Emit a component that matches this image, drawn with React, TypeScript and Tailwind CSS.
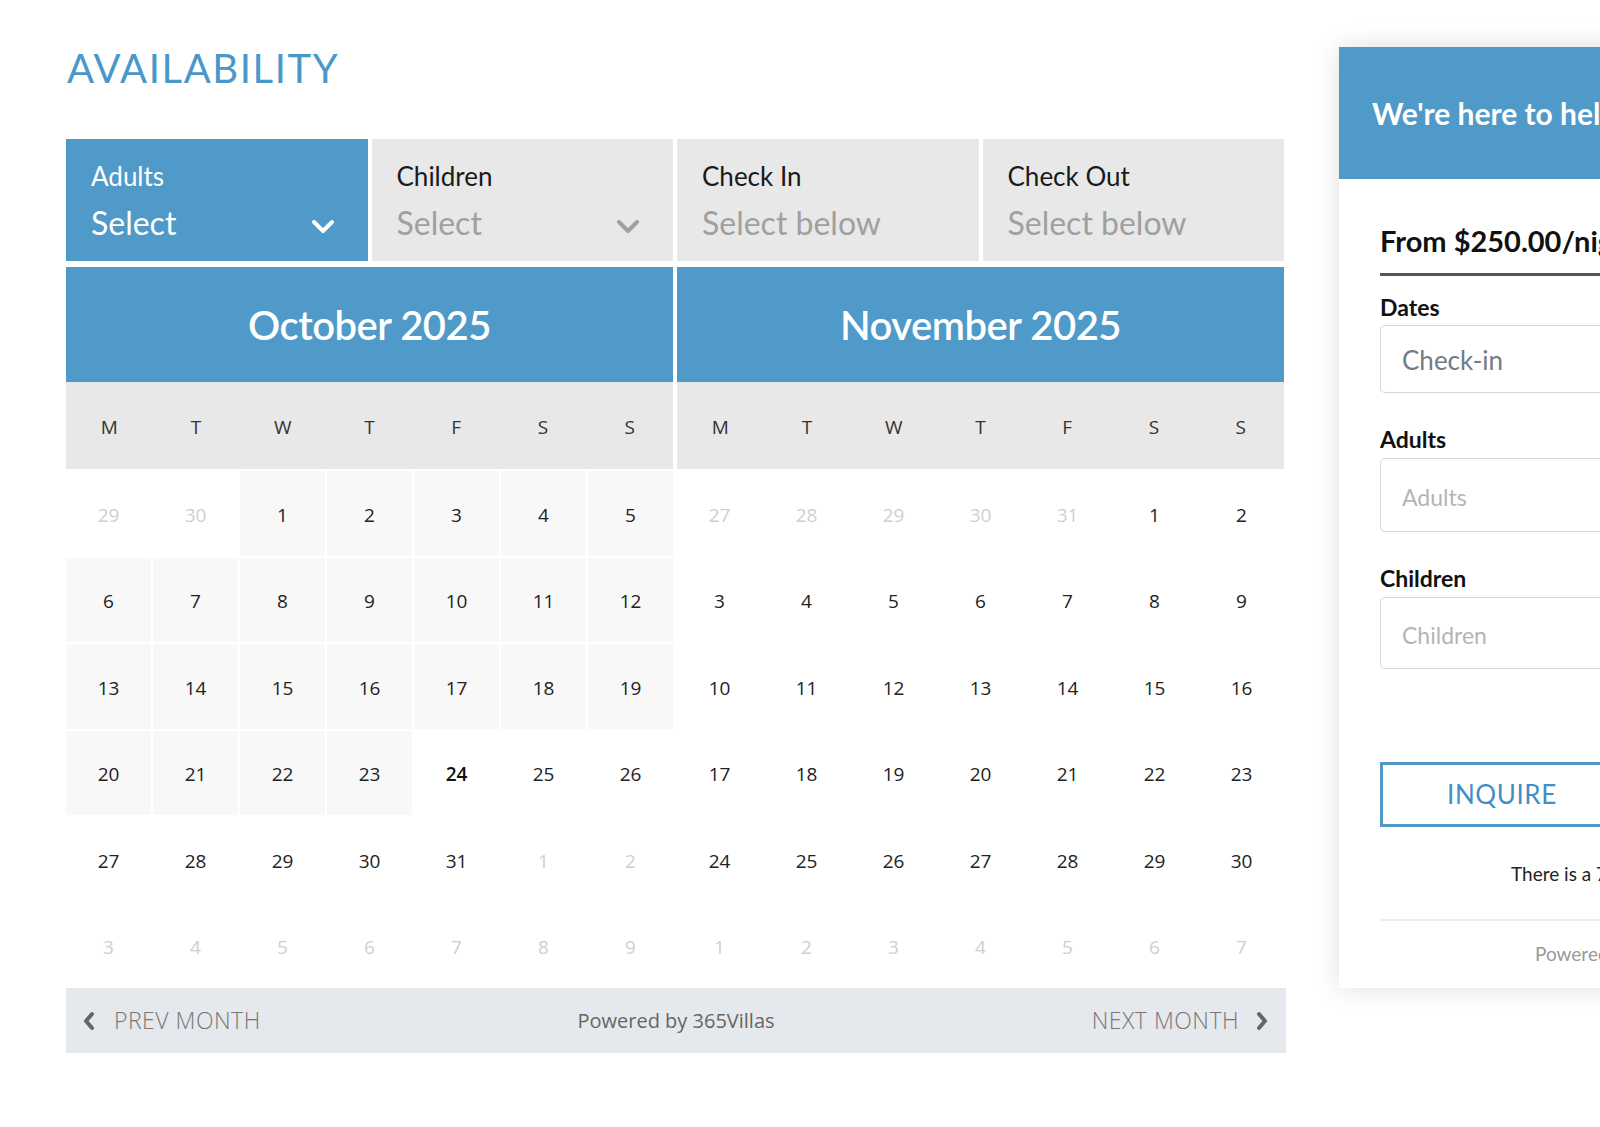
import React from "react";

const BLUE = "bg-[#4f9ac8]";

type Day = { n: number; kind: "past" | "other" | "cur" | "today" };

function Chevron({ color }: { color: string }) {
  return (
    <svg width="24" height="15" viewBox="0 0 24 15" className="shrink-0">
      <polyline points="3,3 12,12 21,3" fill="none" stroke={color} strokeWidth="4" strokeLinecap="round" strokeLinejoin="round" />
    </svg>
  );
}

function SideChevron({ dir }: { dir: "l" | "r" }) {
  return (
    <svg width="14" height="20" viewBox="0 0 14 20" className="shrink-0">
      <polyline
        points={dir === "l" ? "10,3 4,10 10,17" : "4,3 10,10 4,17"}
        fill="none"
        stroke="#666666"
        strokeWidth="4"
        strokeLinecap="round"
        strokeLinejoin="round"
      />
    </svg>
  );
}

function Tab({ label, value, active, chevron }: { label: string; value: string; active?: boolean; chevron?: boolean }) {
  return (
    <div className={`h-[122px] pl-[25px] pr-[33px] pt-[21px] ${active ? BLUE : "bg-[#e8e8e8]"}`}>
      <div className={`text-[26px] leading-[32px] ${active ? "text-white" : "text-[#1a1a1a]"}`}>{label}</div>
      <div className="mt-[12px] flex items-center justify-between">
        <div className={`text-[32px] leading-[38px] ${active ? "text-white" : "text-[#a0a0a0]"}`}>{value}</div>
        {chevron && (
          <div className="mt-[6px]">
            <Chevron color={active ? "#ffffff" : "#a0a0a0"} />
          </div>
        )}
      </div>
    </div>
  );
}

function range(a: number, b: number, kind: Day["kind"]): Day[] {
  const r: Day[] = [];
  for (let i = a; i <= b; i++) r.push({ n: i, kind });
  return r;
}

const octDays: Day[] = [
  ...range(29, 30, "other"),
  ...range(1, 23, "past"),
  { n: 24, kind: "today" },
  ...range(25, 31, "cur"),
  ...range(1, 9, "other"),
];

const novDays: Day[] = [
  ...range(27, 31, "other"),
  ...range(1, 30, "cur"),
  ...range(1, 7, "other"),
];

const DOW = ["M", "T", "W", "T", "F", "S", "S"];

function Month({ title, days }: { title: string; days: Day[] }) {
  return (
    <div>
      <div className={`h-[115px] ${BLUE} flex items-center justify-center`}>
        <span className="text-white text-[40px] font-semibold tracking-[-0.5px]" style={{ fontFamily: "Lato, sans-serif" }}>
          {title}
        </span>
      </div>
      <div className="h-[87px] pt-[3px] bg-[#e8e8e8] grid grid-cols-7 items-center">
        {DOW.map((d, i) => (
          <div key={i} className="text-center text-[19px] text-[#333]">
            {d}
          </div>
        ))}
      </div>
      <div className="pt-[2px] grid grid-cols-7 gap-[2px]">
        {days.map((d, i) => (
          <div
            key={i}
            className={`h-[84.5px] pt-[3px] flex items-center justify-center text-[19px] ${
              d.kind === "past" ? "bg-[#f8f8f8] text-[#222]" : ""
            } ${d.kind === "other" ? "text-[#cfcfcf]" : ""} ${d.kind === "cur" ? "text-[#222]" : ""} ${
              d.kind === "today" ? "text-[#111] font-semibold" : ""
            }`}
          >
            {d.n}
          </div>
        ))}
      </div>
    </div>
  );
}

export default function App() {
  return (
    <div className="w-[1600px] h-[1127px] overflow-hidden bg-white flex" style={{ fontFamily: "'Open Sans', sans-serif" }}>
      <div className="ml-[66px] w-[1220px] shrink-0 pt-[44px]">
        <h1
          className="text-[40px] leading-[48px] tracking-[1.6px] text-[#4a98c9] pl-[1px]"
          style={{ fontFamily: "Lato, sans-serif" }}
        >
          AVAILABILITY
        </h1>
        <div className="mt-[47px] grid grid-cols-4 gap-[4px] w-[1218px]" style={{ fontFamily: "Lato, sans-serif" }}>
          <Tab label="Adults" value="Select" active chevron />
          <Tab label="Children" value="Select" chevron />
          <Tab label="Check In" value="Select below" />
          <Tab label="Check Out" value="Select below" />
        </div>
        <div className="mt-[6px] grid grid-cols-2 gap-[4px] w-[1218px]">
          <Month title="October 2025" days={octDays} />
          <Month title="November 2025" days={novDays} />
        </div>
        <div className="h-[65px] bg-[#e5e8ec] grid grid-cols-[1fr_auto_1fr] items-center text-[20px]">
          <div className="flex items-center pl-[16px] gap-[18px] text-[#777] text-[23px] font-light tracking-[0.5px]">
            <SideChevron dir="l" />
            <span>PREV MONTH</span>
          </div>
          <div className="text-[#666]">Powered by 365Villas</div>
          <div className="flex items-center justify-end pr-[17px] gap-[16px] text-[#777] text-[23px] font-light tracking-[0.5px]">
            <span>NEXT MONTH</span>
            <SideChevron dir="r" />
          </div>
        </div>
      </div>

      <div
        className="ml-[53px] mt-[47px] w-[420px] h-[941px] shrink-0 bg-white shadow-[0_0_24px_rgba(0,0,0,0.13)]"
        style={{ fontFamily: "Lato, sans-serif" }}
      >
        <div className={`h-[132px] ${BLUE} flex items-center pl-[33px]`}>
          <span className="text-white text-[30px] font-bold whitespace-nowrap">We're here to help!</span>
        </div>
        <div className="px-[41px]">
          <div className="pt-[45px] pb-[15px] border-b-[3px] border-[#555] text-[29px] leading-[34px] font-bold text-[#111] whitespace-nowrap">
            From $250.00/night
          </div>
          <div className="mt-[17px] text-[23px] leading-[28px] font-bold text-[#111]">Dates</div>
          <div className="mt-[4px] h-[68px] rounded-[5px] border border-[#d4d7dc] flex items-center pl-[21px] pt-[2px] text-[26px] text-[#737b86]">
            Check-in
          </div>
          <div className="mt-[32px] text-[23px] leading-[28px] font-bold text-[#111]">Adults</div>
          <div className="mt-[5px] h-[74px] rounded-[5px] border border-[#d4d7dc] flex items-center pl-[21px] pt-[5px] text-[23px] text-[#b5b5b5]">
            Adults
          </div>
          <div className="mt-[32px] text-[23px] leading-[28px] font-bold text-[#111]">Children</div>
          <div className="mt-[5px] h-[72px] rounded-[5px] border border-[#d4d7dc] flex items-center pl-[21px] pt-[5px] text-[23px] text-[#b5b5b5]">
            Children
          </div>
          <div className="mt-[93px] h-[65px] border-[3px] border-[#4f9ac8] flex items-center pl-[64px] text-[26px] tracking-[0.6px] text-[#3f8fc4]">
            INQUIRE
          </div>
          <div className="mt-[35px] pl-[131px] text-[19px] leading-[24px] text-[#222] whitespace-nowrap">
            There is a 7 night minimum stay
          </div>
          <div className="mt-[33px] h-[2px] bg-[#eeeeee]" />
          <div className="mt-[21px] pl-[155px] text-[19px] leading-[24px] text-[#9a9a9a] whitespace-nowrap">
            Powered by 365Villas
          </div>
        </div>
      </div>
    </div>
  );
}
